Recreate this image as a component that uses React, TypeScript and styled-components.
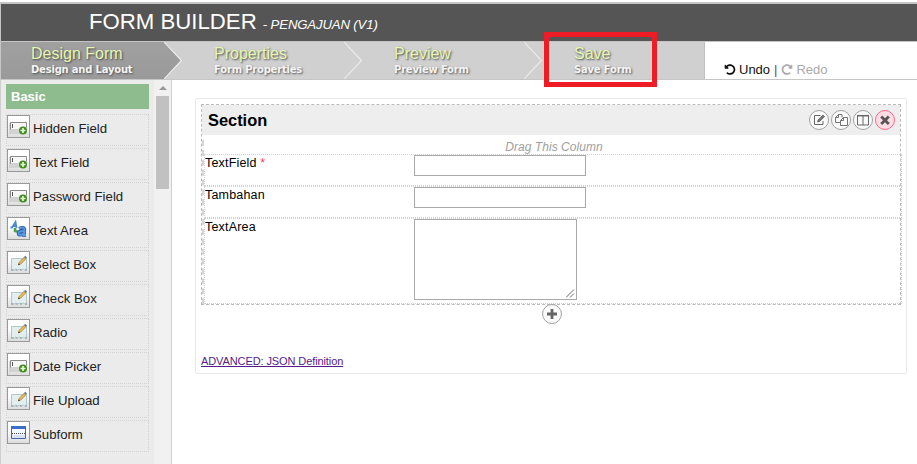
import React from "react";
import styled, { createGlobalStyle } from "styled-components";
import { FaUndoAlt, FaRedoAlt } from "react-icons/fa";

const GlobalStyle = createGlobalStyle`
  * { box-sizing: border-box; }
  body { margin: 0; background: #fff; font-family: "Liberation Sans", Arial, sans-serif; font-size: 13px; color: #000; overflow: hidden; }
`;

const Page = styled.div`
  position: relative;
  height: 464px;
  width: 917px;
  padding-top: 2px;
  display: flex;
  flex-direction: column;
  overflow: hidden;
`;
const Header = styled.header`
  height: 40px;
  flex: none;
  background: #555;
  border: solid #c4c4c4;
  border-width: 2px 0 1px 1px;
  padding: 5px 0 0 88px;
  color: #fff;
  font-size: 22.2px;
  line-height: 26px;
  white-space: nowrap;
`;
const AppName = styled.span`
  font-size: 13.2px;
  font-style: italic;
  letter-spacing: -0.15px;
`;
const Nav = styled.nav`
  height: 38px;
  flex: none;
  display: flex;
  border-bottom: 1px solid #c6c6c6;
  border-left: 1px solid #c6c6c6;
`;
const Steps = styled.div`
  width: 704px;
  display: flex;
  background: #d0d0d0;
  border-right: 1px solid #c0c0c0;
`;
const Step = styled.div<{ $active?: boolean }>`
  width: ${(p) => (p.$active ? 183 : 180)}px;
  flex: none;
  display: flex;
  justify-content: space-between;
  padding-left: 30px;
  background: ${(p) => (p.$active ? "linear-gradient(#a0a0a0, #9a9a9a)" : "#d0d0d0")};
`;
const LastStep = styled(Step)`
  width: 150px;
`;
const StepText = styled.div`
  padding-top: 3px;
  white-space: nowrap;
`;
const StepTitle = styled.div`
  color: #e6f7b0;
  font-size: 16px;
  line-height: 18px;
  text-shadow: 1px 1px 2px #444;
`;
const StepNote = styled.div`
  color: #f4f4f4;
  font: bold 10px/13px "DejaVu Sans", Verdana, sans-serif;
  letter-spacing: -0.2px;
  text-shadow: 1px 1px 2px #555;
`;
const Arrow = styled.svg`
  width: 20px;
  height: 37px;
  flex: none;
`;
const History = styled.div`
  display: flex;
  align-items: center;
  padding: 19px 0 0 19px;
  height: 36px;
  line-height: 17px;
  svg { width: 12px; height: 11px; margin-right: 3px; }
`;
const Redo = styled.span`
  color: #aaa;
  display: flex;
  align-items: center;
`;
const Undo = styled(Redo)`
  color: #111;
`;
const Divider = styled.span`
  margin: 0 4px;
  color: #555;
`;
const Body = styled.div`
  display: flex;
  flex: 1;
  min-height: 0;
`;
const Sidebar = styled.aside`
  width: 172px;
  display: flex;
  background: #ebebeb;
  border: solid #cfcfcf;
  border-width: 0 1px;
`;
const Palette = styled.div`
  width: 153px;
  padding: 4px 5px 0;
  display: flex;
  flex-direction: column;
  gap: 2px;
`;
const Category = styled.div`
  height: 25px;
  margin-bottom: 3px;
  padding-left: 5px;
  background: #8fbc8f;
  color: #fff;
  font-weight: bold;
  line-height: 25px;
`;
const Item = styled.div`
  height: 32px;
  flex: none;
  display: flex;
  border: 1px dotted #d2d2d2;
  line-height: 27px;
  color: #222;
  font-size: 13.2px;
`;
const IconFrame = styled.span`
  width: 23px;
  height: 23px;
  margin-right: 3px;
  border: 1px solid #999;
  background: linear-gradient(#fff 40%, #ddd);
  display: flex;
`;
const Track = styled.div`
  width: 17px;
  background: #f1f1f1;
  display: flex;
  flex-direction: column;
  align-items: center;
`;
const UpArrow = styled.svg`
  width: 8px;
  height: 4px;
  margin: 6px 0;
`;
const Thumb = styled.div`
  width: 13px;
  height: 93px;
  background: #c1c1c1;
`;
const Canvas = styled.main`
  width: 712px;
  height: 276px;
  margin: 18px 0 0 23px;
  padding: 5px;
  border: 1px solid #e9e9e9;
  border-radius: 2px;
  display: flex;
  flex-direction: column;
`;
const Section = styled.section`
  width: 700px;
  height: 201px;
  flex: none;
  border: 1px dashed #bbb;
`;
const SectionHead = styled.div`
  height: 30px;
  background: #eee;
  padding: 0 5px 1px 6px;
  display: flex;
  align-items: center;
  gap: 2px;
`;
const SectionTitle = styled.h2`
  margin: 0;
  flex: 1;
  font-size: 16.4px;
  line-height: 18px;
`;
const Circle = styled.span<{ $danger?: boolean }>`
  width: 20px;
  height: 20px;
  border: 1.500px solid ${(p) => (p.$danger ? "#ff6a88" : "#a2a2a2")};
  background: ${(p) => (p.$danger ? "#ffdde4" : "#fafafa")};
  border-radius: 50%;
  color: #555;
  display: flex;
  align-items: center;
  justify-content: center;
  flex: none;
`;
const Column = styled.div`
  margin-top: 5px;
  width: 700px;
  height: 164px;
  border-left: 2px dashed #d6d6d6;
`;
const DragHint = styled.div`
  height: 14px;
  padding-left: 2px;
  text-align: center;
  color: #a0a0a0;
  font-size: 12px;
  letter-spacing: 0.05px;
  line-height: 14px;
  font-style: italic;
`;
const Row = styled.div<{ $tall?: boolean }>`
  height: ${(p) => (p.$tall ? 86 : 32)}px;
  width: 698px;
  border: 1px dotted #d2d2d2;
  display: flex;
  font-size: 12.500px;
  line-height: 16px;
`;
const Label = styled.label`
  width: 209px;
  letter-spacing: 0.18px;
`;
const Required = styled.span`
  color: #ff3c50;
`;
const TextInput = styled.input`
  width: 172px;
  height: 21px;
  border: 1px solid #a9a9a9;
  padding: 1px;
`;
const TextBox = styled.div`
  width: 163px;
  height: 81px;
  border: 1px solid #a9a9a9;
  display: flex;
  align-items: flex-end;
  justify-content: flex-end;
  padding: 1px;
`;
const AddLine = styled.div`
  display: flex;
  justify-content: center;
  padding-left: 2px;
  margin-top: -1px;
`;
const Advanced = styled.a`
  margin-top: 30px;
  color: #551a8b;
  font-size: 11px;
  letter-spacing: -0.1px;
  line-height: 14px;
  text-decoration: underline;
  align-self: flex-start;
`;
const Highlight = styled.div`
  position: absolute;
  left: 544px;
  top: 32px;
  width: 113px;
  height: 55px;
  border: 5px solid #ee1c25;
`;

type IconKind = "field" | "area" | "edit" | "form";

const FieldIcon = () => (
  <svg width="21" height="21" viewBox="0 0 21 21">
    <path d="M1 7h18v11H1z" fill="#d2d2d2" />
    <path d="M2 7h16v6H2z" fill="#f7f7f7" />
    <path d="M2.500 13.500v-7h16v5" fill="none" stroke="#8a8a8a" />
    <path d="M4.500 8v4" stroke="#555" />
    <circle cx="15" cy="14.500" r="4" fill="#438b22" />
    <path d="M12.500 14.500h5M15 12v5" stroke="#e4ffd4" strokeWidth="1.600" />
  </svg>
);
const AreaIcon = () => (
  <svg width="21" height="21" viewBox="0 0 21 21" fill="none">
    <path d="M2.500 9.500h1.500L7.500 4l1 6M4.500 8h4" stroke="#4e88cf" strokeWidth="1.800" />
    <path d="M7 10v3l4 1" stroke="#4ba152" strokeWidth="2.500" />
    <path d="M11 10.500q5-2 5.500.5l-.5 6h2M16 13q-5.500 0-5.500 2.500t5 .5" stroke="#28569d" strokeWidth="3.400" />
    <path d="M11 10.500q5-2 5.500.5l-.5 6h2M16 13q-5.500 0-5.500 2.500t5 .5" stroke="#579ae5" strokeWidth="1.900" />
  </svg>
);
const EditIcon = () => (
  <svg width="21" height="21" viewBox="0 0 21 21">
    <path d="M3.500 6.500h15v11.500h-2l-1-1-2 1-2-1-2 1-2-1-1 1h-3z" fill="#e3eeee" stroke="#b1c8c9" />
    <path d="M3 18h2.500M7.500 18h2M12 18h2M17 18h2" stroke="#82999b" />
    <path d="M10.500 12.800l.8-2.500 4.700-5 1.700 1.700-4.900 5z" fill="#efbb55" stroke="#9b7b3c" strokeWidth=".7" />
    <path d="M16 5l1.200-1.200 1.900 1.800-1.300 1.300z" fill="#687a9c" />
    <path d="M10 13.300l2-.8-1.200-1.200z" fill="#333" />
  </svg>
);
const FormIcon = () => (
  <svg width="21" height="21" viewBox="0 0 21 21">
    <path d="M3.500 4.500h14v12h-14z" fill="#f3f7ff" stroke="#4565a7" />
    <path d="M3 4h15v3H3z" fill="#3a6fca" />
    <path d="M4 13h13v3H4z" fill="#d8e2f4" />
    <path d="M4 11.500h13" stroke="#444" strokeDasharray="1 1" />
  </svg>
);
const icons: Record<IconKind, () => React.JSX.Element> = {
  field: FieldIcon,
  area: AreaIcon,
  edit: EditIcon,
  form: FormIcon,
};

const items: [string, IconKind][] = [
  ["Hidden Field", "field"],
  ["Text Field", "field"],
  ["Password Field", "field"],
  ["Text Area", "area"],
  ["Select Box", "edit"],
  ["Check Box", "edit"],
  ["Radio", "edit"],
  ["Date Picker", "field"],
  ["File Upload", "edit"],
  ["Subform", "form"],
];

const Pencil = () => (
  <svg width="14" height="14" viewBox="0 0 14 14" fill="none" stroke="#555">
    <path d="M8.500 2.500h-6v9h8.500V8" strokeWidth=".9" />
    <path d="M5.500 9l.7-2.300L11 2l1.600 1.600-4.700 4.700z" fill="#777" strokeWidth=".7" />
  </svg>
);
const Copy = () => (
  <svg width="16" height="16" viewBox="0 0 16 16" fill="none" stroke="#666" strokeWidth=".9">
    <path d="M8 10.500H2.500v-5l3-3H9v3M2.500 5.500h3v-3" />
    <path d="M7.500 13.500v-5l3-3h4v8zM7.500 8.500h3v-3" fill="#fafafa" />
  </svg>
);
const Columns = () => (
  <svg width="14" height="14" viewBox="0 0 14 14" fill="none" stroke="#666">
    <path d="M1.500 2.500h11v9.500h-11zM7 3v9" />
    <path d="M1 2.700h12" strokeWidth="1.500" />
  </svg>
);
const Plus = () => (
  <svg width="12" height="12" viewBox="0 0 12 12" stroke="#666" strokeWidth="2.800">
    <path d="M1 6h10M6 1v10" />
  </svg>
);
const Cross = () => (
  <svg width="12" height="12" viewBox="0 0 12 12" stroke="#555" strokeWidth="2.800">
    <path d="M2.200 2.500l7.600 7.600M9.800 2.500l-7.600 7.600" />
  </svg>
);
const StepArrow = ({ active }: { active?: boolean }) => (
  <Arrow viewBox="0 0 20 37">
    {active && <path d="M0 0L17 18.500L0 37H20V0Z" fill="#d0d0d0" />}
    <path d="M0 0L17.500 18.500L0 37" fill="none" stroke="#ebebeb" strokeWidth="1.200" />
  </Arrow>
);

export default function App() {
  return (
    <>
      <GlobalStyle />
      <Page>
        <Header>
          FORM BUILDER <AppName>- PENGAJUAN (V1)</AppName>
        </Header>
        <Nav>
          <Steps>
            <Step $active>
              <StepText>
                <StepTitle>Design Form</StepTitle>
                <StepNote>Design and Layout</StepNote>
              </StepText>
              <StepArrow active />
            </Step>
            <Step>
              <StepText>
                <StepTitle>Properties</StepTitle>
                <StepNote>Form Properties</StepNote>
              </StepText>
              <StepArrow />
            </Step>
            <Step>
              <StepText>
                <StepTitle>Preview</StepTitle>
                <StepNote>Preview Form</StepNote>
              </StepText>
              <StepArrow />
            </Step>
            <LastStep>
              <StepText>
                <StepTitle>Save</StepTitle>
                <StepNote>Save Form</StepNote>
              </StepText>
            </LastStep>
          </Steps>
          <History>
            <Undo><FaUndoAlt />Undo</Undo>
            <Divider>|</Divider>
            <Redo><FaRedoAlt />Redo</Redo>
          </History>
        </Nav>
        <Body>
          <Sidebar>
            <Palette>
              <Category>Basic</Category>
              {items.map(([name, kind]) => {
                const Icon = icons[kind];
                return (
                  <Item key={name}>
                    <IconFrame><Icon /></IconFrame>
                    {name}
                  </Item>
                );
              })}
            </Palette>
            <Track>
              <UpArrow viewBox="0 0 8 4"><path d="M0 4L4 0L8 4Z" fill="#999" /></UpArrow>
              <Thumb />
            </Track>
          </Sidebar>
          <Canvas>
            <Section>
              <SectionHead>
                <SectionTitle>Section</SectionTitle>
                <Circle><Pencil /></Circle>
                <Circle><Copy /></Circle>
                <Circle><Columns /></Circle>
                <Circle $danger><Cross /></Circle>
              </SectionHead>
              <Column>
                <DragHint>Drag This Column</DragHint>
                <Row>
                  <Label>TextField <Required>*</Required></Label>
                  <TextInput />
                </Row>
                <Row>
                  <Label>Tambahan</Label>
                  <TextInput />
                </Row>
                <Row $tall>
                  <Label>TextArea</Label>
                  <TextBox>
                    <svg width="9" height="9" viewBox="0 0 9 9" stroke="#555" strokeWidth=".9">
                      <path d="M0 8.500L8 .5M4 8.500L8 4.500" />
                    </svg>
                  </TextBox>
                </Row>
              </Column>
            </Section>
            <AddLine>
              <Circle><Plus /></Circle>
            </AddLine>
            <Advanced>ADVANCED: JSON Definition</Advanced>
          </Canvas>
        </Body>
        <Highlight />
      </Page>
    </>
  );
}
